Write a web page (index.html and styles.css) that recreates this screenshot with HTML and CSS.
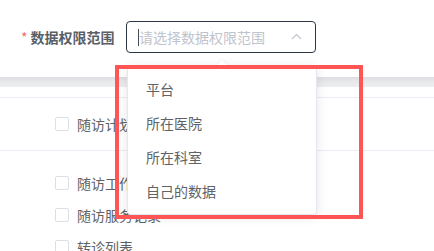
FILE: index.html
```html
<!DOCTYPE html>
<html lang="zh-CN">
<head>
    <meta charset="UTF-8">
    <title>数据权限范围</title>
    <link rel="stylesheet" href="styles.css">
</head>
<body>
    <div class="form-item">
        <label class="form-label"><span class="required">*</span>数据权限范围</label>
        <div class="select">
            <span class="caret"></span>
            <span class="placeholder">请选择数据权限范围</span>
            <svg class="arrow" width="11" height="7" viewBox="0 0 11 7">
                <path d="M1 6 L5.5 1.5 L10 6" fill="none" stroke="#c0c4cc" stroke-width="1.2"/>
            </svg>
            <div class="dropdown">
                <div class="popper-arrow"></div>
                <div class="option">平台</div>
                <div class="option">所在医院</div>
                <div class="option">所在科室</div>
                <div class="option">自己的数据</div>
            </div>
        </div>
    </div>

    <div class="band"></div>
    <div class="spacer"></div>

    <div class="group first">
        <div class="check-row"><span class="checkbox"></span>随访计划</div>
    </div>
    <div class="group second">
        <div class="check-row"><span class="checkbox"></span>随访工作台</div>
        <div class="check-row"><span class="checkbox"></span>随访服务记录</div>
        <div class="check-row"><span class="checkbox"></span>转诊列表</div>
    </div>

    <div class="highlight"></div>
</body>
</html>
```

FILE: styles.css
```css
body {
    margin: 0;
    padding: 0;
    font-family: "Noto Sans CJK SC", "Noto Sans", sans-serif;
    font-size: 14px;
    color: #606266;
    background: #fff;
    overflow: hidden;
}

.form-item {
    display: flex;
    align-items: center;
    padding-top: 21px;
    height: 32px;
}

.form-label {
    width: 105px;
    padding-left: 21px;
    font-weight: bold;
    color: #5a5e66;
    line-height: 32px;
}

.required {
    color: #f56c6c;
    font-weight: normal;
    margin-right: 3px;
}

.select {
    position: relative;
    box-sizing: border-box;
    width: 190px;
    height: 32px;
    border: 1px solid #2d3544;
    border-radius: 4px;
    display: flex;
    align-items: center;
    padding-left: 11px;
}

.caret {
    width: 1px;
    height: 17px;
    background: #4a4f57;
}

.placeholder {
    color: #c0c4cc;
    flex-grow: 1;
    line-height: 30px;
}

.arrow {
    margin-right: 13px;
    margin-top: -1px;
}

.dropdown {
    position: absolute;
    top: 43px;
    left: 0;
    width: 190px;
    box-sizing: border-box;
    padding: 6px 0;
    background: #fff;
    border: 1px solid #e4e7ed;
    border-radius: 4px;
    box-shadow: 0 2px 12px 0 rgba(0, 0, 0, 0.1);
    z-index: 5;
}

.popper-arrow {
    position: absolute;
    top: -6px;
    left: 88px;
    width: 0;
    height: 0;
    border-left: 6px solid transparent;
    border-right: 6px solid transparent;
    border-bottom: 6px solid #fff;
    filter: drop-shadow(0 -1px 1px rgba(0, 0, 0, 0.05));
}

.option {
    height: 34px;
    line-height: 34px;
    padding-left: 18px;
    color: #606266;
}

.band {
    margin-top: 24px;
    height: 10px;
    background: linear-gradient(#dcdee1, #e6e8ea 40%, #eceef0);
}

.spacer {
    height: 10px;
    border-bottom: 1px solid #ebeef5;
}

.group {
    padding-left: 55px;
}

.group.first {
    padding-top: 10px;
    padding-bottom: 10px;
    border-bottom: 1px solid #ebeef5;
}

.group.second {
    padding-top: 16px;
}

.check-row {
    display: flex;
    align-items: center;
    height: 32px;
}

.checkbox {
    box-sizing: border-box;
    width: 14px;
    height: 14px;
    border: 1px solid #dcdfe6;
    border-radius: 2px;
    margin-right: 8px;
    background: #fff;
}

.highlight {
    position: absolute;
    left: 115px;
    top: 65px;
    width: 248px;
    height: 154px;
    box-sizing: border-box;
    border: 4px solid #ff5555;
    z-index: 10;
}
```
